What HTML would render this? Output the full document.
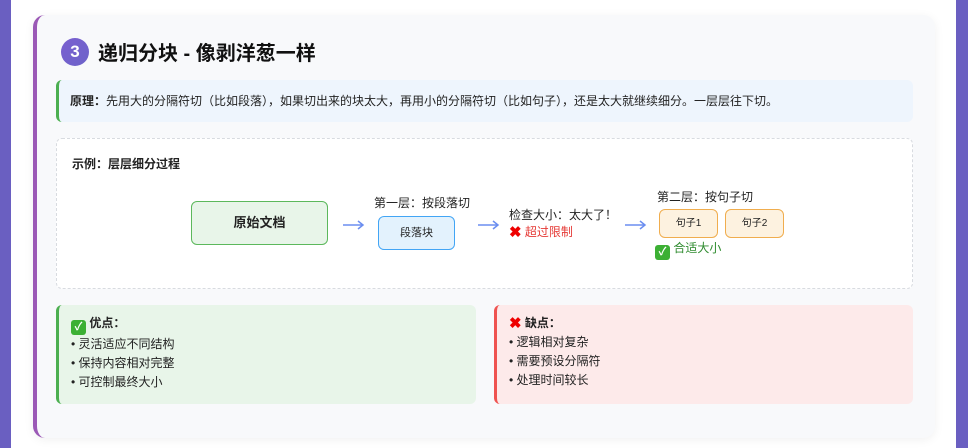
<!DOCTYPE html>
<html><head><meta charset="utf-8"><style>
*{margin:0;padding:0;box-sizing:border-box}
body{width:968px;height:448px;overflow:hidden;background:#6a5fc1;font-family:"Liberation Sans","Noto Sans CJK SC",sans-serif;color:#222;position:relative}
.panel{position:absolute;left:11px;top:0;width:945px;height:448px;background:#fff}
.card{position:absolute;left:33px;top:15px;width:902px;height:423px;background:#f8f9fb;border-left:4px solid #9b59b6;border-radius:12px;box-shadow:0 2px 10px rgba(0,0,0,.06)}
.abs{position:absolute;white-space:nowrap}
.badge{left:24px;top:23px;width:28px;height:28px;border-radius:50%;background:linear-gradient(135deg,#7a5fd0,#6c63c9);color:#fff;font-weight:bold;font-size:17px;text-align:center;line-height:28px}
.title{left:61px;top:22px;font-size:20px;font-weight:bold;color:#111}
.pr{left:19px;top:65px;width:857px;height:42px;background:#eef5fd;border-left:3px solid #4caf50;border-radius:6px;font-size:12px;line-height:42px;padding-left:11px}
.ex{left:19px;top:123px;width:857px;height:151px;background:#fff;border:1px dashed #d8dbe0;border-radius:6px}
.box{position:absolute;border-radius:6px;font-size:12px;text-align:center}
.arr{position:absolute;width:22px;height:10px}
.pc{position:absolute;top:290px;width:420px;height:99px;border-radius:6px;font-size:12px;line-height:19px;padding:9px 0 0 12px}
.ck{display:inline-block;width:15px;height:15px;background:#3cb034;border-radius:3px;color:#fff;font-size:11px;font-weight:bold;text-align:center;line-height:15px;vertical-align:-3px}
.x{color:#e00;font-weight:bold;font-size:15px;vertical-align:-1px}
</style></head><body>
<div class="panel"></div>
<div class="card">
<div class="abs badge">3</div>
<div class="abs title">递归分块 - 像剥洋葱一样</div>
<div class="abs pr"><b>原理：</b>先用大的分隔符切（比如段落），如果切出来的块太大，再用小的分隔符切（比如句子），还是太大就继续细分。一层层往下切。</div>
<div class="abs ex">
 <div class="abs" style="left:15px;top:16px;font-size:12px;font-weight:bold">示例：层层细分过程</div>
 <div class="box" style="left:134px;top:62px;width:137px;height:44px;background:#e8f5e9;border:1px solid #5cb85c;line-height:42px;font-weight:bold;font-size:13px">原始文档</div>
 <svg class="arr" style="left:286px;top:81px" viewBox="0 0 22 10"><path d="M0 5H20M15 1L20 5L15 9" stroke="#6b8ef0" stroke-width="1.5" fill="none"/></svg>
 <div class="abs" style="left:317px;top:55px;font-size:12px">第一层：按段落切</div>
 <div class="box" style="left:321px;top:77px;width:77px;height:34px;background:#e3f2fd;border:1px solid #42a5f5;line-height:32px;font-size:11px">段落块</div>
 <svg class="arr" style="left:421px;top:81px" viewBox="0 0 22 10"><path d="M0 5H20M15 1L20 5L15 9" stroke="#6b8ef0" stroke-width="1.5" fill="none"/></svg>
 <div class="abs" style="left:452px;top:67px;font-size:12px">检查大小：太大了！</div>
 <div class="abs" style="left:452px;top:84px;font-size:12px;color:#e53935"><span class="x">✖</span> 超过限制</div>
 <svg class="arr" style="left:568px;top:81px" viewBox="0 0 22 10"><path d="M0 5H20M15 1L20 5L15 9" stroke="#6b8ef0" stroke-width="1.5" fill="none"/></svg>
 <div class="abs" style="left:600px;top:49px;font-size:12px">第二层：按句子切</div>
 <div class="box" style="left:602px;top:70px;width:59px;height:29px;background:#fdf2e0;border:1px solid #f0ad4e;line-height:27px;font-size:10px">句子1</div>
 <div class="box" style="left:668px;top:70px;width:59px;height:29px;background:#fdf2e0;border:1px solid #f0ad4e;line-height:27px;font-size:10px">句子2</div>
 <div class="abs" style="left:598px;top:100px;font-size:12px;color:#2e8b2e"><span class="ck">✓</span> 合适大小</div>
</div>
<div class="pc" style="left:19px;background:#e8f5e9;border-left:3px solid #4caf50">
 <div><span class="ck">✓</span> <b>优点：</b></div>
 <div>• 灵活适应不同结构</div><div>• 保持内容相对完整</div><div>• 可控制最终大小</div>
</div>
<div class="pc" style="left:457px;width:419px;background:#fdeaea;border-left:3px solid #ef5350">
 <div><span class="x">✖</span> <b>缺点：</b></div>
 <div>• 逻辑相对复杂</div><div>• 需要预设分隔符</div><div>• 处理时间较长</div>
</div>
</div>
</body></html>
